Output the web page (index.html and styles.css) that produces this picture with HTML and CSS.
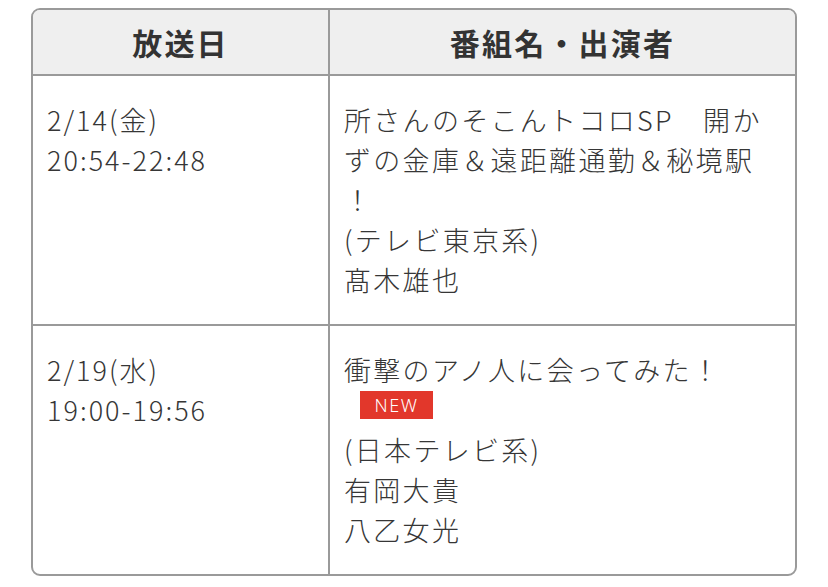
FILE: index.html
```html
<!DOCTYPE html>
<html lang="ja">
<head>
<meta charset="utf-8">
<title>放送予定</title>
<link rel="stylesheet" href="styles.css">
</head>
<body>
<div class="schedule">
  <div class="cell head">放送日</div>
  <div class="cell head last">番組名・出演者</div>

  <div class="cell date">2/14(金)<br>20:54-22:48</div>
  <div class="cell prog last">所さんのそこんトコロSP　開か<br>ずの金庫＆遠距離通勤＆秘境駅<br>！<br>(テレビ東京系)<br>髙木雄也</div>

  <div class="cell date bottom">2/19(水)<br>19:00-19:56</div>
  <div class="cell prog last bottom">衝撃のアノ人に会ってみた！<div class="badge-line"><span class="badge">NEW</span></div>(日本テレビ系)<br>有岡大貴<br>八乙女光</div>
</div>
</body>
</html>
```

FILE: styles.css
```css
html, body {
  margin: 0;
  padding: 0;
  background: #ffffff;
}

body {
  font-family: "Noto Sans CJK JP", "Noto Sans", sans-serif;
  color: #333333;
}

.schedule {
  margin: 8px 31px 0;
  border: 2px solid #9a9a9a;
  border-radius: 9px;
  overflow: hidden;
  display: grid;
  grid-template-columns: 297px 1fr;
}

.cell {
  box-sizing: border-box;
  border-right: 2px solid #9a9a9a;
  border-bottom: 2px solid #9a9a9a;
}

.cell.last {
  border-right: none;
}

.cell.bottom {
  border-bottom: none;
}

.head {
  height: 66px;
  background: #efefef;
  font-size: 30px;
  font-weight: 700;
  letter-spacing: 2.2px;
  display: flex;
  align-items: center;
  justify-content: center;
  color: #333333;
}

.date,
.prog {
  padding: 24px 14px 24px 14px;
  font-size: 27px;
  font-weight: 300;
  line-height: 40px;
  letter-spacing: 2.3px;
  white-space: nowrap;
  color: #363636;
}

.date {
  letter-spacing: 2px;
}

.badge-line {
  height: 40px;
  padding-left: 16px;
  box-sizing: border-box;
  padding-top: 1px;
}

.badge {
  display: flex;
  align-items: center;
  justify-content: center;
  width: 73px;
  height: 28px;
  background: #e2372b;
  color: #ffffff;
  font-family: "Noto Sans", sans-serif;
  font-size: 18px;
  font-weight: 300;
  letter-spacing: 1.5px;
  line-height: 1;
}
```
